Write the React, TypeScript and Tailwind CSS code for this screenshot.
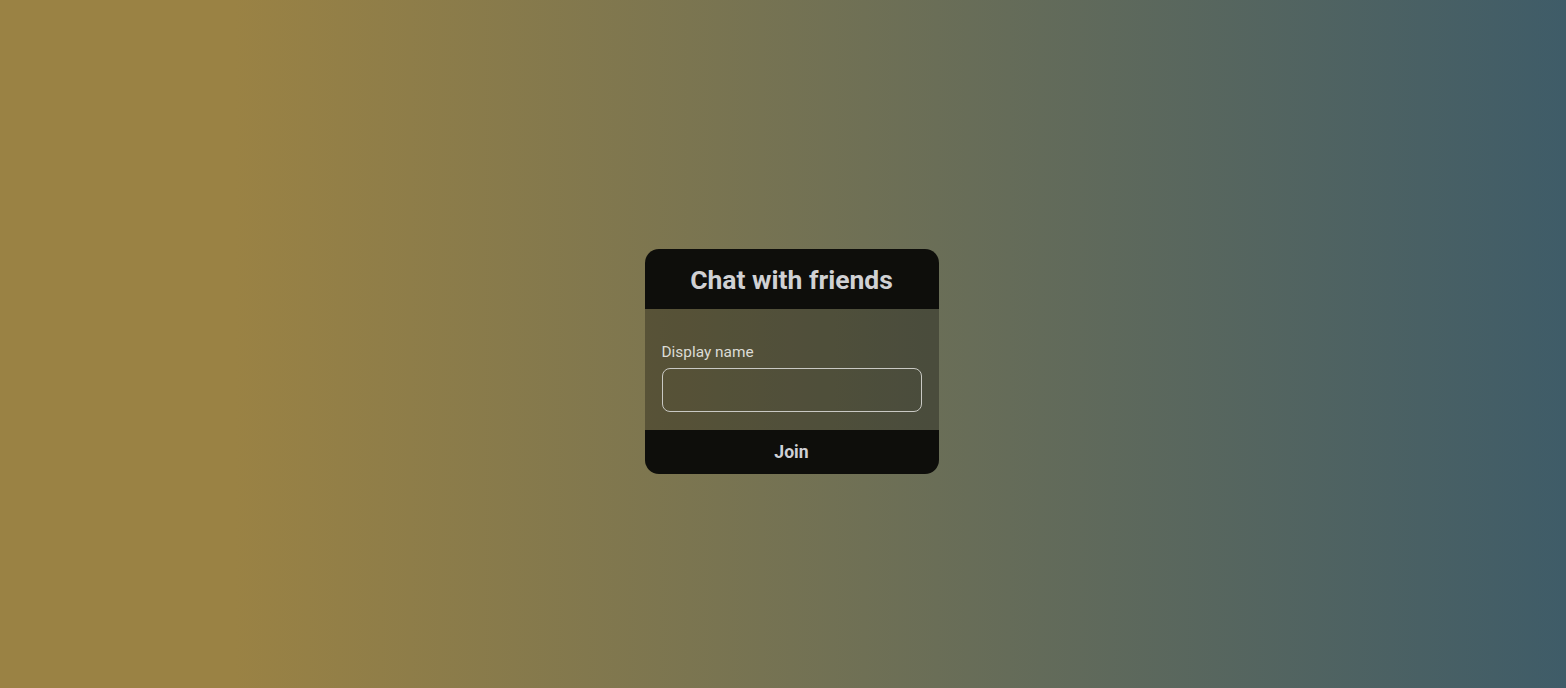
export default function App() {
  return (
    <div
      className="flex min-h-screen w-full items-center justify-center bg-[linear-gradient(to_right,#9a8244_15%,#3f5c68_100%)] pl-[17px] pt-[35px]"
      style={{ fontFamily: "Roboto, 'Liberation Sans', sans-serif" }}
    >
      <div className="flex w-[294px] flex-col overflow-hidden rounded-[14px] text-[#d4d4d4]">
        <header className="flex h-[60px] items-center justify-center bg-[#0e0e0b]">
          <h1 className="pt-[2px] text-[26.5px] font-bold leading-none text-[#d0d1d4]">Chat with friends</h1>
        </header>

        <div className="flex flex-col bg-black/30 px-[17px] pt-[34px] pb-[18px]">
          <label className="mb-[6px] text-[15.4px] leading-[19px] text-[#dcdcd6]">Display name</label>
          <input
            type="text"
            className="h-[44px] w-full rounded-[8px] border border-[#c9c9c4] bg-transparent px-3 text-[15px] text-[#e5e5e5] outline-none"
          />
        </div>

        <button className="flex h-[44px] items-center justify-center bg-[#0e0e0b] text-[17.6px] font-bold text-[#cfd0d6]">
          Join
        </button>
      </div>
    </div>
  );
}
